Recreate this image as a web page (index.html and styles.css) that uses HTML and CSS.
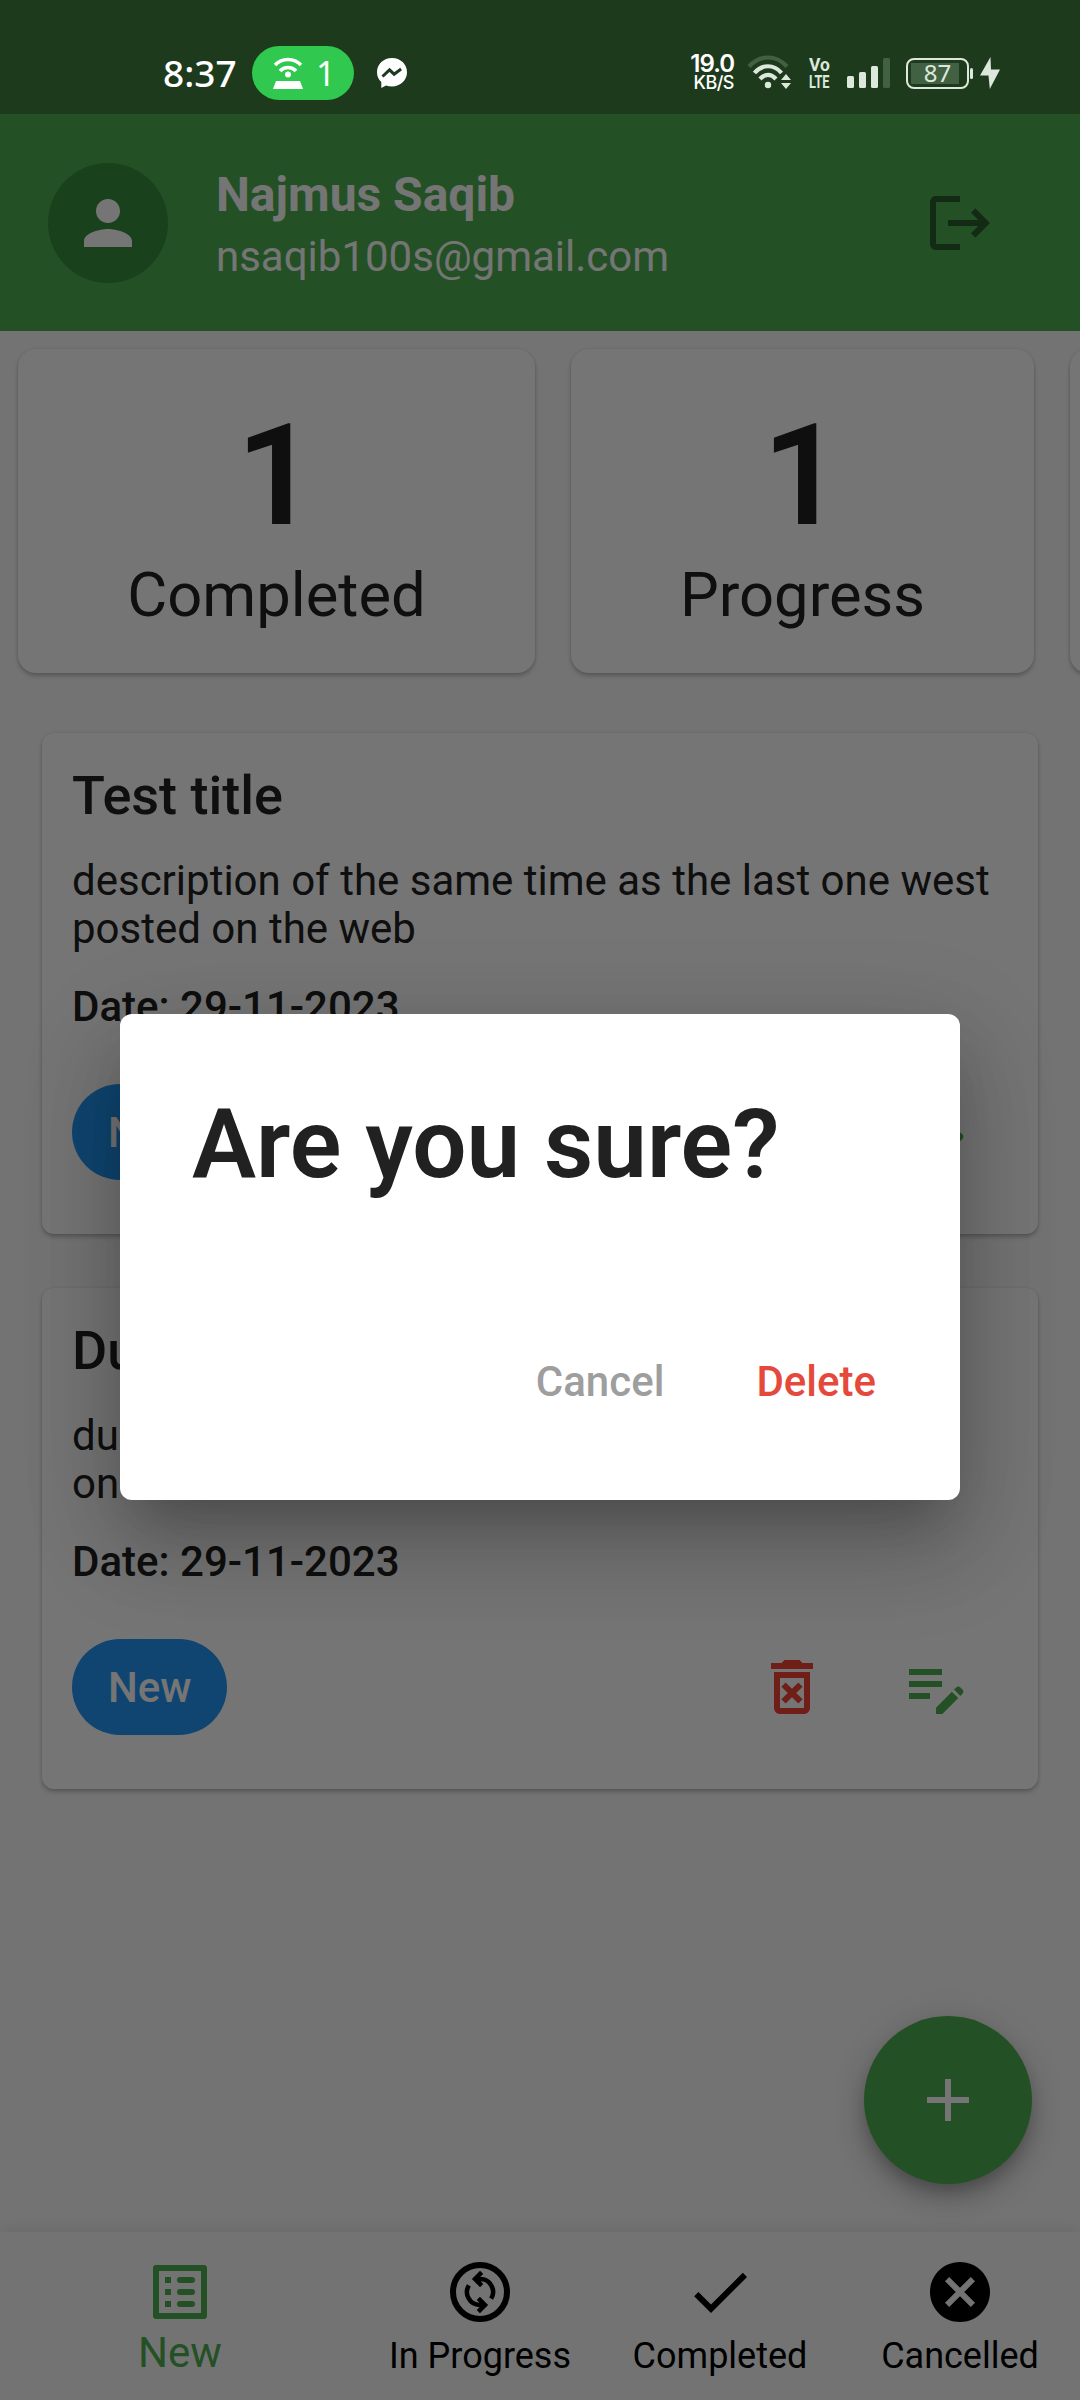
FILE: index.html
```html
<!DOCTYPE html>
<html lang="en">
<head>
<meta charset="utf-8">
<title>Task Manager</title>
<link rel="stylesheet" href="styles.css">
</head>
<body>
<div class="app">
  <header class="profile">
    <div class="avatar"><svg class="icon" viewBox="0 0 24 24"><path d="M12 12c2.21 0 4-1.79 4-4s-1.79-4-4-4-4 1.79-4 4 1.79 4 4 4zm0 2c-2.67 0-8 1.34-8 4v2h16v-2c0-2.66-5.33-4-8-4z"/></svg></div>
    <div class="who">
      <div class="name">Najmus Saqib</div>
      <div class="email">nsaqib100s@gmail.com</div>
    </div>
    <svg class="icon logout" viewBox="0 0 24 24"><path d="M22 12l-4.900-4.900-1.450 1.450L18.100 11H8v2h10.100l-2.450 2.450 1.450 1.450zM4 5h8V3H4c-1.100 0-2 .9-2 2v14c0 1.100.9 2 2 2h8v-2H4V5z"/></svg>
  </header>

  <section class="stats">
    <div class="stat stat-completed"><div class="count">1</div><div class="label">Completed</div></div>
    <div class="stat stat-progress"><div class="count">1</div><div class="label">Progress</div></div>
    <div class="stat stat-next"></div>
  </section>

  <main class="tasks">
    <article class="task">
      <h2 class="task-title">Test title</h2>
      <p class="task-text">description of the same time as the last one west posted on the web</p>
      <p class="task-date">Date: 29-11-2023</p>
      <div class="task-foot">
        <span class="chip">New</span>
        <svg class="icon delete" viewBox="0 0 24 24"><path d="M14.12 10.47L12 12.59l-2.13-2.12-1.41 1.41L10.59 14l-2.12 2.12 1.41 1.41L12 15.41l2.12 2.12 1.41-1.41L13.41 14l2.12-2.12zM15.5 4l-1-1h-5l-1 1H5v2h14V4zM6 19c0 1.1.9 2 2 2h8c1.1 0 2-.9 2-2V7H6v12zM8 9h8v10H8V9z"/></svg>
        <svg class="icon edit" viewBox="0 0 24 24"><path d="M3 10h11v2H3v-2zm0-2h11V6H3v2zm0 8h7v-2H3v2zm15.01-3.13.71-.71c.39-.39 1.02-.39 1.41 0l.71.71c.39.39.39 1.02 0 1.41l-.71.71-2.12-2.12zm-.71.71-5.3 5.3V21h2.12l5.3-5.3-2.12-2.12z"/></svg>
      </div>
    </article>
    <article class="task">
      <h2 class="task-title">Du</h2>
      <p class="task-text">du<br>on</p>
      <p class="task-date">Date: 29-11-2023</p>
      <div class="task-foot">
        <span class="chip">New</span>
        <svg class="icon delete" viewBox="0 0 24 24"><path d="M14.12 10.47L12 12.59l-2.13-2.12-1.41 1.41L10.59 14l-2.12 2.12 1.41 1.41L12 15.41l2.12 2.12 1.41-1.41L13.41 14l2.12-2.12zM15.5 4l-1-1h-5l-1 1H5v2h14V4zM6 19c0 1.1.9 2 2 2h8c1.1 0 2-.9 2-2V7H6v12zM8 9h8v10H8V9z"/></svg>
        <svg class="icon edit" viewBox="0 0 24 24"><path d="M3 10h11v2H3v-2zm0-2h11V6H3v2zm0 8h7v-2H3v2zm15.01-3.13.71-.71c.39-.39 1.02-.39 1.41 0l.71.71c.39.39.39 1.02 0 1.41l-.71.71-2.12-2.12zm-.71.71-5.3 5.3V21h2.12l5.3-5.3-2.12-2.12z"/></svg>
      </div>
    </article>
  </main>

  <nav class="tabs">
    <div class="tab active"><svg class="icon" viewBox="0 0 24 24"><path d="M12 7h4a1 1 0 0 1 0 2h-4a1 1 0 0 1 0-2zm0 4h4a1 1 0 0 1 0 2h-4a1 1 0 0 1 0-2zm0 4h4a1 1 0 0 1 0 2h-4a1 1 0 0 1 0-2zM7 7h2v2H7zm0 4h2v2H7zm0 4h2v2H7zM20.1 3H3.9c-.5 0-.9.4-.9.9v16.2c0 .4.4.9.9.9h16.2c.4 0 .9-.5.9-.9V3.9c0-.5-.5-.9-.9-.9zM19 19H5V5h14v14z"/></svg><span>New</span></div>
    <div class="tab"><svg class="icon" viewBox="-12 -12 24 24"><circle r="9" fill="none" stroke="#000" stroke-width="2"/><g fill="none" stroke="#000" stroke-width="1.500"><path d="M.55-6.550L-1.650-4.350.55-2.150M-1.500-4.300H0A4.250 4.250 0 0 1 3.700 2.200"/><path d="M-.55 6.550L1.650 4.350-.55 2.150M1.500 4.300H0A4.250 4.250 0 0 1-3.700-2.200"/></g></svg><span>In Progress</span></div>
    <div class="tab"><svg class="icon" viewBox="0 0 24 24"><path d="M9 16.2L4.8 12l-1.4 1.4L9 19 21 7l-1.4-1.4L9 16.2z"/></svg><span>Completed</span></div>
    <div class="tab"><svg class="icon" viewBox="0 0 24 24"><path d="M12 2C6.47 2 2 6.47 2 12s4.47 10 10 10 10-4.47 10-10S17.53 2 12 2zm5 13.59L15.59 17 12 13.41 8.41 17 7 15.59 10.59 12 7 8.41 8.41 7 12 10.59 15.59 7 17 8.41 13.41 12 17 15.59z"/></svg><span>Cancelled</span></div>
  </nav>
  <button class="fab"><svg class="icon" viewBox="0 0 24 24"><path d="M19 13h-6v6h-2v-6H5v-2h6V5h2v6h6v2z"/></svg></button>

  <div class="scrim">
    <div class="dialog">
      <h1 class="dialog-title">Are you sure?</h1>
      <div class="dialog-actions"><span class="cancel">Cancel</span><span class="confirm">Delete</span></div>
    </div>
  </div>

  <div class="statusbar">
    <div class="clock">8:37</div>
    <div class="hotspot">
      <svg width="32" height="34" viewBox="0 0 32 34"><g fill="none" stroke="#fff" stroke-width="3.600"><path d="M3 9A18 18 0 0 1 29 9"/><path d="M8 15A11 11 0 0 1 24 15"/></g><circle cx="16" cy="18.500" r="3" fill="#fff"/><path d="M4 25h24l3 8H1z" fill="#fff"/></svg>
      <span>1</span>
    </div>
    <svg class="messenger" width="32" height="32" viewBox="0 0 32 32"><path fill="#fff" d="M16 1C7.500 1 1 7.200 1 15.200c0 4 1.600 7.400 4.300 9.800V31l4.700-2.500c1.900.6 3.900.9 6 .9 8.500 0 15-6.200 15-14.200S24.500 1 16 1z"/><path d="M6.500 19.500l7-6.700 4.600 4.400 7-5.200" fill="none" stroke="#1d3a1d" stroke-width="3"/></svg>
    <div class="speed"><b>19.0</b><span>KB/S</span></div>
    <svg class="wifi" width="46" height="36" viewBox="0 0 46 36"><g fill="none" stroke-width="4.200"><path stroke="#426142" d="M2 11.500C13-.5 29-.5 40 11.500"/><path stroke="#dde8dd" d="M7.500 18C15 9 27 9 34.500 18"/><path stroke="#dde8dd" d="M13 24C18 18.500 24 18.500 29 24"/></g><circle cx="21" cy="30" r="3.200" fill="#dde8dd"/><path fill="#dde8dd" d="M34 25l5-6 5 6zM34 28h10l-5 6z"/></svg>
    <div class="volte"><span>Vo</span><span>LTE</span></div>
    <svg class="signal" width="44" height="32" viewBox="0 0 44 32"><g fill="#dde8dd"><rect x="0" y="19" width="7" height="12" rx="1.500"/><rect x="12" y="15" width="7" height="16" rx="1.500"/><rect x="24" y="9" width="7" height="22" rx="1.500"/></g><rect x="36" y="1" width="7" height="30" rx="1.500" fill="#426142"/></svg>
    <div class="battery"><span>87</span></div>
    <svg class="bolt" width="20" height="32" viewBox="0 0 20 32"><path fill="#dde8dd" d="M10.500 0L0 18.500h8.500L9.800 32 20 12.500h-9z"/></svg>
  </div>
</div>
</body>
</html>
```
FILE: styles.css
```css
* { box-sizing: border-box; margin: 0; padding: 0; }
body { background: #fafafa; font-family: Roboto, sans-serif; color: #212121; }
.app { position: relative; width: 1080px; height: 2400px; overflow: hidden; background: #fafafa; display: flex; flex-direction: column; padding-top: 114px; }
.icon { width: 72px; height: 72px; fill: currentColor; flex: none; display: block; }

.profile { height: 217px; flex: none; background: #4caf50; display: flex; align-items: center; padding: 0 84px 0 48px; }
.avatar { width: 120px; height: 120px; border-radius: 50%; background: #388e3c; color: #fff; display: flex; align-items: center; justify-content: center; }
.who { margin-left: 48px; flex: 1; padding-top: 9px; color: #fff; }
.name { font-size: 48px; font-weight: 700; line-height: 56px; }
.email { margin-top: 4px; font-size: 42px; line-height: 60px; }
.logout { color: #2a5f2c; }

.stats { display: flex; flex: none; gap: 36px; padding: 18px 0 0 18px; }
.stat { flex: none; height: 324px; border-radius: 18px; background: #fff; text-align: center; padding-top: 42px; box-shadow: 0 3px 4px rgba(0,0,0,.22), 0 0 3px rgba(0,0,0,.1); }
.stat-completed { width: 517px; }
.stat-progress { width: 463px; }
.stat-next { width: 400px; }
.count { font-size: 141px; font-weight: 600; line-height: 169px; }
.label { font-size: 61.5px; line-height: 70px; }

.tasks { flex: 1; padding: 60px 42px 0; display: flex; flex-direction: column; gap: 54px; }
.task { height: 501px; flex: none; border-radius: 12px; background: #fff; padding: 31px 30px 0; box-shadow: 0 3px 4px rgba(0,0,0,.22), 0 0 3px rgba(0,0,0,.1); }
.task-title { font-size: 54px; font-weight: 500; line-height: 63px; }
.task-text { margin-top: 30px; font-size: 42px; line-height: 48px; }
.task-date { margin-top: 30px; font-size: 42px; font-weight: 500; line-height: 48px; }
.task-foot { display: flex; align-items: center; margin-top: 53px; height: 96px; padding-right: 36px; gap: 72px; }
.chip { margin-right: auto; height: 96px; padding: 1px 36px 0; line-height: 96px; border-radius: 48px; background: #2196f3; color: #fff; font-size: 42px; font-weight: 500; }
.delete { color: #f44336; }
.edit { color: #4caf50; }

.tabs { height: 168px; flex: none; background: #fafafa; color: #000; display: flex; box-shadow: 0 -3px 12px rgba(0,0,0,.08); }
.tab { flex: 2; padding-top: 24px; display: flex; flex-direction: column; align-items: center; font-size: 36px; line-height: 42px; white-space: nowrap; }
.tab span { margin-top: 7px; }
.tab.active { flex: 3; color: #4caf50; font-size: 42px; line-height: 48px; }
.tab.active span { margin-top: 1px; }

.fab { position: absolute; right: 48px; bottom: 216px; width: 168px; height: 168px; border: 0; border-radius: 50%; background: #4caf50; color: #fff; display: flex; align-items: center; justify-content: center; box-shadow: 0 10px 16px -3px rgba(0,0,0,.2), 0 16px 32px rgba(0,0,0,.16), 0 3px 36px rgba(0,0,0,.1); }

.scrim { position: absolute; inset: 0; padding-top: 114px; background: rgba(0,0,0,.54); display: flex; align-items: center; justify-content: center; }
.dialog { width: 840px; height: 486px; border-radius: 12px; background: #fff; padding: 74px 72px 71px; display: flex; flex-direction: column; justify-content: space-between; box-shadow: 0 33px 45px -21px rgba(0,0,0,.2), 0 50px 90px 9px rgba(0,0,0,.14), 0 20px 100px 10px rgba(0,0,0,.1); }
.dialog-title { font-size: 96px; font-weight: 600; line-height: 113px; }
.dialog-actions { display: flex; justify-content: flex-end; gap: 92px; padding: 0 12px 23px 0; font-size: 42px; font-weight: 500; line-height: 48px; }
.cancel { color: #9e9e9e; }
.confirm { color: #e5493c; }

.statusbar { position: absolute; top: 0; left: 0; width: 1080px; height: 114px; background: #1d3a1d; padding: 32px 0 0 163px; display: flex; align-items: center; color: #fff; }
.clock { width: 89px; font: 500 37px/54px "Noto Sans", sans-serif; }
.hotspot { width: 102px; height: 54px; border-radius: 27px; background: #30c84e; display: flex; align-items: center; gap: 12px; padding-left: 20px; font: 34px/54px "Noto Sans", sans-serif; }
.messenger { margin-left: 22px; }
.speed { margin-left: 280px; width: 46px; display: flex; flex-direction: column; align-items: flex-end; }
.speed b { font: 600 24px/19px Inter, sans-serif; letter-spacing: -1px; }
.speed span { font: 500 18px/19px Inter, sans-serif; letter-spacing: -.5px; }
.wifi { margin-left: 13px; }
.volte { margin-left: 16px; width: 24px; display: flex; flex-direction: column; align-items: flex-start; font: 700 19px/17px Roboto, sans-serif; color: #dde8dd; }
.volte span { transform: scaleX(.67); transform-origin: left; }
.volte span:first-child { transform: scaleX(.92); }
.signal { margin-left: 14px; }
.battery { position: relative; margin-left: 15px; width: 63px; height: 31px; border: 2px solid #dde8dd; border-radius: 8px; background: linear-gradient(#426142, #426142) 3px 3px / 48px 21px no-repeat; font: 24px/26px "Noto Sans", sans-serif; text-align: center; color: #dde8dd; }
.battery::after { content: ""; position: absolute; right: -6px; top: 8px; width: 3px; height: 11px; border-radius: 2px; background: #dde8dd; }
.bolt { margin-left: 11px; }
```
